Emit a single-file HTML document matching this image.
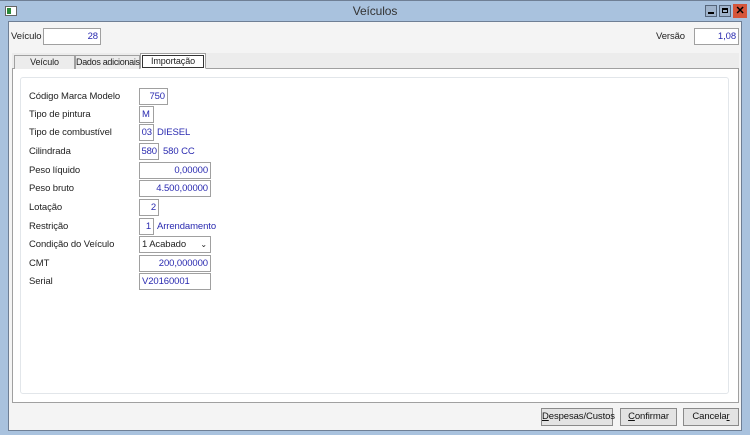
<!DOCTYPE html><html><head><style>
*{margin:0;padding:0;box-sizing:border-box}
body{width:750px;height:435px;background:#a9c2de;font-family:"Liberation Sans",sans-serif;font-size:9.5px;letter-spacing:-0.1px;color:#222;position:relative;overflow:hidden;white-space:nowrap}
.a{position:absolute}
.in{position:absolute;background:#fff;border:1px solid #a0a0a0;height:17px;line-height:15px;color:#2a2ab0;padding:0 2px;white-space:nowrap}
.r{text-align:right}
.l{position:absolute;left:29px;line-height:17px}
.t{position:absolute;line-height:17px;color:#2a2ab0}
.btn{position:absolute;top:408px;height:18px;border:1px solid #8a8a8a;background:#e3e3e3;text-align:center;line-height:16px;color:#111}
.tab{position:absolute;top:55px;height:14px;border:1px solid #a0a0a0;border-bottom:none;background:#ececec;text-align:center;line-height:13px;font-size:9px}
</style></head><body>
<div class="a" style="left:0;top:0;width:750px;height:1px;background:#6f7f95"></div>
<div class="a" style="left:5px;top:6px;width:12px;height:10px;background:#fff;border:1px solid #666"><div style="width:4px;height:6px;background:#2a8a3a;margin:1px"></div></div>
<div class="a" style="left:0;top:4px;width:750px;text-align:center;font-size:12px;color:#333">Veículos</div>
<div class="a" style="left:705px;top:5px;width:12px;height:12px;background:#a0b4cc;border:1px solid #55657a"><div style="position:absolute;left:2px;top:6px;width:6px;height:2px;background:#000"></div></div>
<div class="a" style="left:719px;top:5px;width:12px;height:12px;background:#a0b4cc;border:1px solid #55657a"><div style="position:absolute;left:2px;top:2px;width:6px;height:5px;border:1px solid #000;border-top-width:2px"></div></div>
<div class="a" style="left:733px;top:4px;width:14px;height:14px;background:#d5553a;color:#000;font-weight:bold;text-align:center;line-height:14px;font-size:11px">✕</div>
<div class="a" style="left:8px;top:21px;width:734px;height:410px;background:#f4f4f4;border:1px solid #6f7f95"></div>
<div class="a" style="left:11px;top:28px;line-height:17px">Veículo</div>
<div class="in r" style="left:43px;top:28px;width:58px">28</div>
<div class="a" style="left:656px;top:28px;line-height:17px">Versão</div>
<div class="in r" style="left:694px;top:28px;width:45px">1,08</div>
<div class="a" style="left:12px;top:53px;width:727px;height:16px;background:#ececec"></div>
<div class="a" style="left:12px;top:68px;width:727px;height:335px;background:#fff;border:1px solid #a0a0a0"></div>
<div class="tab" style="left:14px;width:61px">Veículo</div>
<div class="tab" style="left:75px;width:65px;letter-spacing:-0.3px">Dados adicionais</div>
<div class="tab" style="left:140px;top:53px;width:66px;height:16px;background:#fff;border-bottom:1px solid #fff;z-index:2"><div style="margin:1px;border:1px solid #333;line-height:11px">Importação</div></div>
<div class="a" style="left:20px;top:77px;width:709px;height:317px;border:1px solid #e2e6ea;border-radius:3px;background:#fff"></div>
<div class="l" style="top:88px">Código Marca Modelo</div><div class="in r" style="left:139px;top:88px;width:29px">750</div>
<div class="l" style="top:106px">Tipo de pintura</div><div class="in" style="left:139px;top:106px;width:15px">M</div>
<div class="l" style="top:124px">Tipo de combustível</div><div class="in r" style="left:139px;top:124px;width:15px;padding:0 1px">03</div><div class="t" style="left:157px;top:124px">DIESEL</div>
<div class="l" style="top:143px">Cilindrada</div><div class="in r" style="left:139px;top:143px;width:20px;padding:0 1px">580</div><div class="t" style="left:163px;top:143px">580 CC</div>
<div class="l" style="top:162px">Peso líquido</div><div class="in r" style="left:139px;top:162px;width:72px">0,00000</div>
<div class="l" style="top:180px">Peso bruto</div><div class="in r" style="left:139px;top:180px;width:72px">4.500,00000</div>
<div class="l" style="top:199px">Lotação</div><div class="in r" style="left:139px;top:199px;width:20px">2</div>
<div class="l" style="top:218px">Restrição</div><div class="in r" style="left:139px;top:218px;width:15px">1</div><div class="t" style="left:157px;top:218px">Arrendamento</div>
<div class="l" style="top:236px">Condição do Veículo</div><div class="in" style="left:139px;top:236px;width:72px;color:#222">1 Acabado<span style="position:absolute;right:3px;top:0;font-size:8px">&#8964;</span></div>
<div class="l" style="top:255px">CMT</div><div class="in r" style="left:139px;top:255px;width:72px">200,000000</div>
<div class="l" style="top:273px">Serial</div><div class="in" style="left:139px;top:273px;width:72px">V20160001</div>
<div class="btn" style="left:541px;width:72px"><u>D</u>espesas/Custos</div>
<div class="btn" style="left:620px;width:57px"><u>C</u>onfirmar</div>
<div class="btn" style="left:683px;width:56px">Cancela<u>r</u></div>
</body></html>
